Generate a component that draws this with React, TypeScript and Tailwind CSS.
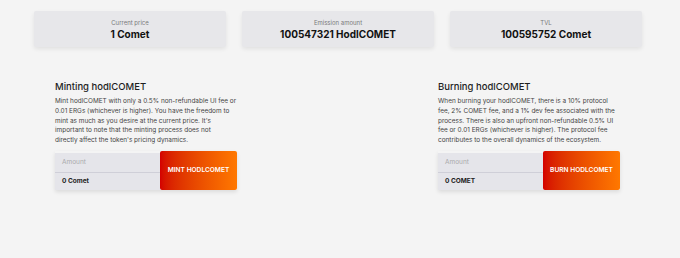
import React from "react";

type Stat = { label: string; value: string };

const stats: Stat[] = [
  { label: "Current price", value: "1 Comet" },
  { label: "Emission amount", value: "100547321 HodlCOMET" },
  { label: "TVL", value: "100595752 Comet" },
];

function StatCard({ label, value }: Stat) {
  return (
    <div className="flex h-[36px] w-[192px] flex-col items-center rounded-[2px] bg-[#e7e7ea] pt-[8px] shadow-[0_2px_4px_rgba(0,0,0,0.08)]">
      <span className="text-[6px] leading-[8px] text-[#7a7a7a]">{label}</span>
      <span className="mt-[1px] text-[10px] font-bold leading-[13px] text-[#111]">
        {value}
      </span>
    </div>
  );
}

function ActionPanel({
  title,
  children,
  unit,
  action,
  textWidth,
}: {
  title: string;
  children: React.ReactNode;
  unit: string;
  action: string;
  textWidth: string;
}) {
  return (
    <div className="flex w-[182px] flex-col">
      <h2 className="text-[9.5px] font-medium leading-[12px] text-[#1e1e1e]">
        {title}
      </h2>
      <p className={`mt-[4px] text-[6.45px] leading-[9.8px] text-[#444] ${textWidth}`}>
        {children}
      </p>
      <div className="mt-[5px] flex h-[39px] shadow-[0_2px_4px_rgba(0,0,0,0.1)]">
        <div className="mt-[2px] flex flex-1 flex-col bg-[#e5e5ea]">
          <div className="flex h-[19px] items-center px-[7px] text-[6.5px] text-[#aaa]">
            Amount
          </div>
          <div className="h-px bg-[#cfcfd8]" />
          <div className="flex flex-1 items-center px-[7px] text-[6.5px] font-bold text-[#222]">
            0 {unit}
          </div>
        </div>
        <button className="flex w-[77px] items-center justify-center rounded-[2px] bg-gradient-to-r from-[#d40000] to-[#ff7800] text-[6.6px] font-semibold text-white">
          {action}
        </button>
      </div>
    </div>
  );
}

export default function App() {
  return (
    <div
      className="h-[258px] w-full bg-[#f4f4f4]"
      style={{ fontFamily: "Inter, 'Liberation Sans', sans-serif" }}
    >
      <div className="mx-auto w-[608px] -translate-x-[2px] pt-[11px]">
        <div className="flex justify-between">
          {stats.map((s) => (
            <StatCard key={s.label} {...s} />
          ))}
        </div>
        <div className="mt-[34px] flex justify-between pl-[21px] pr-[22px]">
          <ActionPanel
            title="Minting hodlCOMET"
            unit="Comet"
            action="MINT HODLCOMET"
            textWidth="w-[186px]"
          >
            Mint hodlCOMET with only a 0.5% non-refundable UI fee or 0.01 ERGs
            (whichever is higher). You have the freedom to mint as much as you
            desire at the current price. It's important to note that the minting
            process does not
            <br />
            directly affect the token's pricing dynamics.
          </ActionPanel>
          <ActionPanel
            title="Burning hodlCOMET"
            unit="COMET"
            action="BURN HODLCOMET"
            textWidth="w-[182px]"
          >
            When burning your hodlCOMET, there is a 10% protocol fee, 2% COMET
            fee, and a 1% dev fee associated with the process. There is also an
            upfront non-refundable 0.5% UI fee or 0.01 ERGs (whichever is
            higher). The protocol fee contributes to the overall dynamics of the
            ecosystem.
          </ActionPanel>
        </div>
      </div>
    </div>
  );
}
